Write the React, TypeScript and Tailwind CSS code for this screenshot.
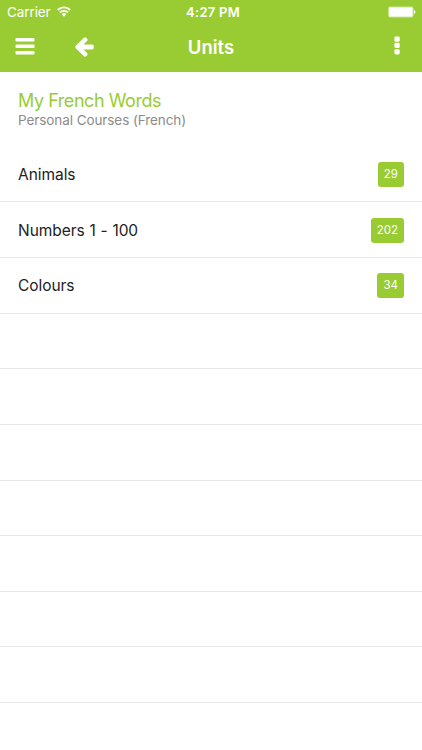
interface Unit {
  name: string;
  count: number;
}

const units: Unit[] = [
  { name: "Animals", count: 29 },
  { name: "Numbers 1 - 100", count: 202 },
  { name: "Colours", count: 34 },
];

const EMPTY_ROWS = 7;

function WifiIcon() {
  return (
    <svg className="mb-px" width="14" height="11" viewBox="0 0 14 11" fill="none" stroke="white" strokeWidth="1.8">
      <path d="M0.8 4a8.8 8.8 0 0 1 12.4 0" />
      <path d="M2.9 6.5a5.8 5.8 0 0 1 8.2 0" />
      <path d="M7 10.7L4.7 8.3a3.2 3.2 0 0 1 4.6 0z" fill="white" stroke="none" />
    </svg>
  );
}

function BatteryIcon() {
  return (
    <svg width="28" height="12" viewBox="0 0 28 12">
      <rect x="0.1" y="0.4" width="25.4" height="11" rx="1.8" fill="white" fillOpacity="0.5" />
      <rect x="1.1" y="1.4" width="23.4" height="9" rx="0.8" fill="white" />
      <path d="M26 4v4c1.9-.6 1.9-3.4 0-4z" fill="white" />
    </svg>
  );
}

function MenuIcon() {
  return (
    <svg width="20" height="18" viewBox="0 0 20 18" fill="white">
      <rect x="0.5" y="0.1" width="19" height="3.4" rx="0.8" />
      <rect x="0.5" y="6.6" width="19" height="3.4" rx="0.8" />
      <rect x="0.5" y="13" width="19" height="3.4" rx="0.8" />
    </svg>
  );
}

function BackIcon() {
  return (
    <svg width="19" height="20" viewBox="64 160 1472 1600" fill="white">
      <path d="M1536 896v128q0 53-32.5 90.5t-84.5 37.5h-704l293 294q38 36 38 90t-38 90l-75 76q-37 37-90 37-52 0-91-37l-651-652q-37-37-37-90 0-52 37-91l651-650q38-38 91-38 52 0 90 38l75 74q38 38 38 91t-38 91l-293 293h704q52 0 84.5 37.5t32.5 90.5z" />
    </svg>
  );
}

function MoreIcon() {
  return (
    <svg width="6" height="20" viewBox="0 0 6 20" fill="white">
      <rect x="0.4" y="0.4" width="5.3" height="5.3" rx="1.4" />
      <rect x="0.4" y="6.8" width="5.3" height="5.3" rx="1.4" />
      <rect x="0.4" y="13.2" width="5.3" height="5.3" rx="1.4" />
    </svg>
  );
}

function StatusBar() {
  return (
    <div className="flex h-6 items-center justify-between pr-1.5 pl-[7px] text-[13.5px]">
      <div className="flex w-32 items-center gap-1.5">
        <span className="tracking-[-0.1px]">Carrier</span>
        <WifiIcon />
      </div>
      <span className="pt-px pl-[3px] text-[13px] font-semibold tracking-[0.25px]">4:27 PM</span>
      <div className="flex w-32 justify-end">
        <BatteryIcon />
      </div>
    </div>
  );
}

function UnitRow({ name, count }: Unit) {
  return (
    <li className="flex h-[55.65px] items-center justify-between border-b border-[#e7e7e7] px-[18px] pt-px">
      <span className="text-[15.5px] tracking-[-0.05px] text-[#222] [word-spacing:0.5px]">{name}</span>
      <span className="flex h-[25px] items-center rounded-[3px] bg-[#99cc33] px-[6px] text-[11.5px] text-white">
        {count}
      </span>
    </li>
  );
}

export default function App() {
  return (
    <div className="h-[750px] w-full overflow-hidden bg-white font-['Inter',sans-serif]">
      <header className="h-[72px] bg-[#99cc33] text-white">
        <StatusBar />
        <nav className="flex h-12 items-center justify-between pr-[22px] pl-[15px]">
          <div className="flex w-24 items-center gap-[39.5px] pb-0.5">
            <MenuIcon />
            <BackIcon />
          </div>
          <h1 className="pl-[7px] text-[18.5px] font-semibold">Units</h1>
          <div className="flex w-24 justify-end pb-1">
            <MoreIcon />
          </div>
        </nav>
      </header>

      <section className="h-[74.7px] px-[18px] pt-[17px]">
        <h2 className="text-[18px] leading-6 tracking-[-0.45px] text-[#99cc33]">My French Words</h2>
        <p className="text-[13.5px] leading-[15px] tracking-[-0.08px] text-[#8c8c8c]">Personal Courses (French)</p>
      </section>

      <ul>
        {units.map((unit) => (
          <UnitRow key={unit.name} {...unit} />
        ))}
        {Array.from({ length: EMPTY_ROWS }, (_, i) => (
          <li key={i} className="h-[55.65px] border-b border-[#e7e7e7]" />
        ))}
      </ul>
    </div>
  );
}
